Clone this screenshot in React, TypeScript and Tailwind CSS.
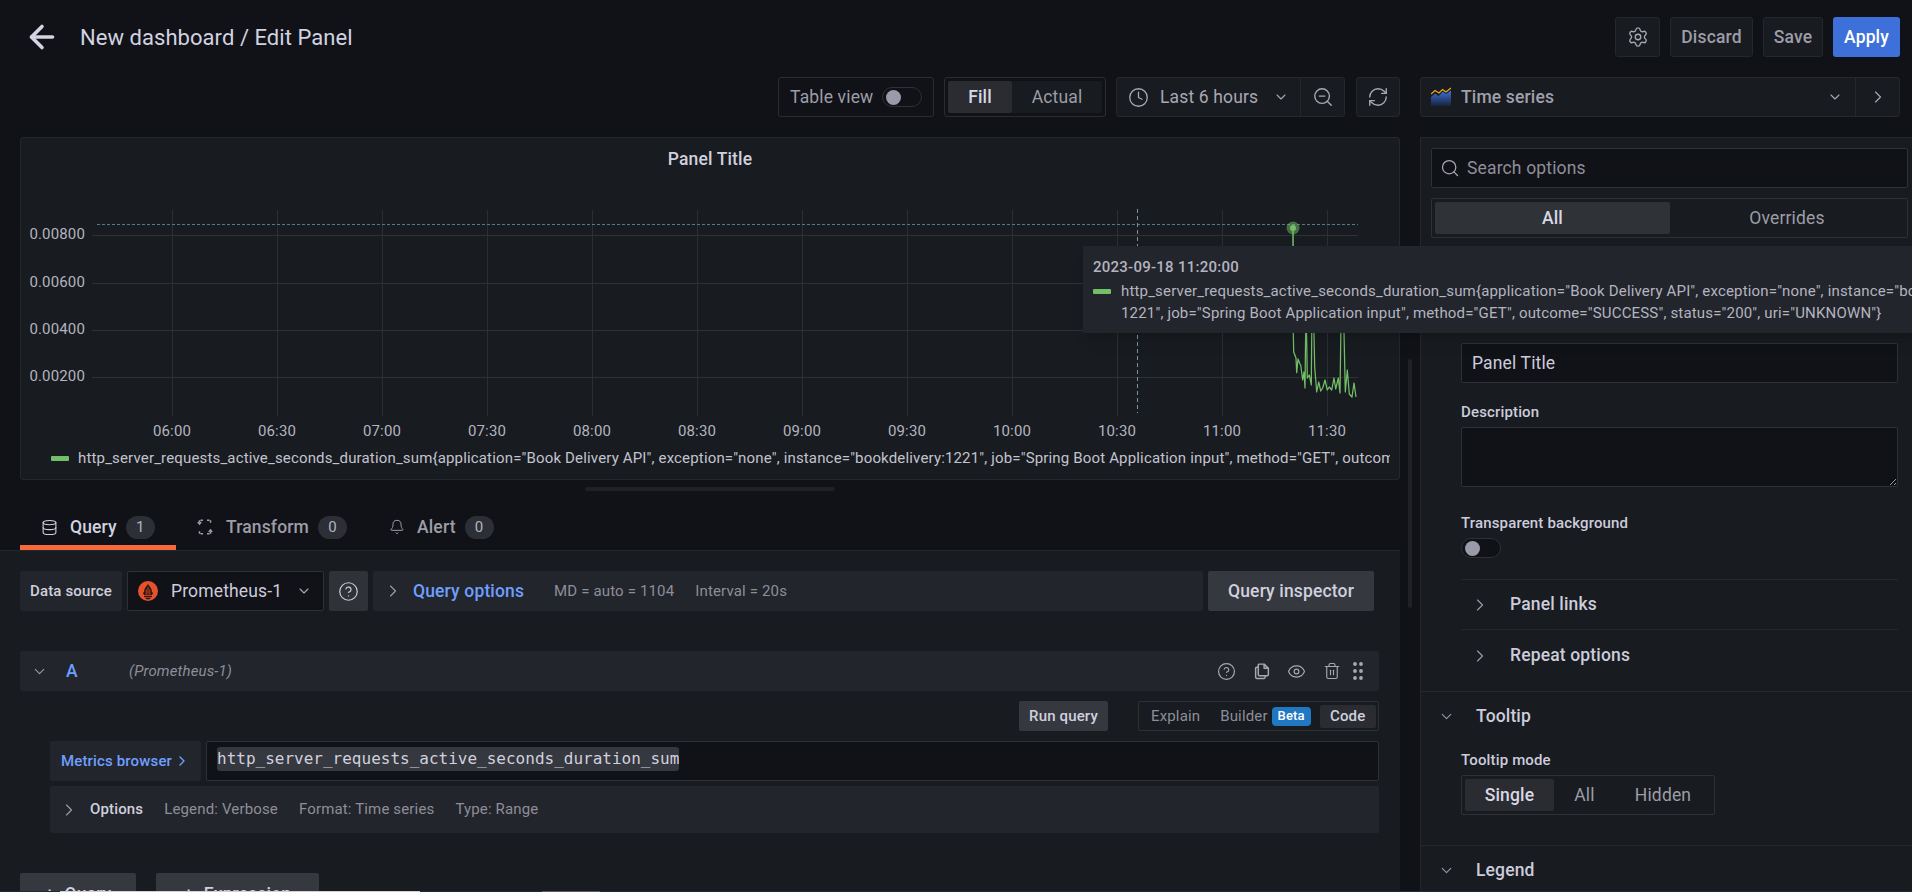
import React from "react";
import {
  ChevronDown,
  ChevronRight,
  Clock,
  Database,
  Bell,
  CircleHelp,
  Eye,
  Trash2,
  GripVertical,
  Search,
  Settings,
  ZoomOut,
  RefreshCw,
  ArrowLeft,
} from "lucide-react";

const ticks = ["06:00", "06:30", "07:00", "07:30", "08:00", "08:30", "09:00", "09:30", "10:00", "10:30", "11:00", "11:30"];
const yLabels = [
  { y: 235, label: "0.00800" },
  { y: 283, label: "0.00600" },
  { y: 330, label: "0.00400" },
  { y: 377, label: "0.00200" },
];

// series points, read off the screenshot
const series =
  "M1293 228 L1293.3 333 L1293.7 352 L1296 358 L1296.7 372.7 L1298 359 L1300 364 L1300.7 365 L1302.7 380 L1304 372 L1305 388 L1306 300 L1307.3 378 L1309.3 375 L1311.3 385 L1312 300 L1313.3 300 L1314.7 367 L1316.7 392 L1318.7 382 L1320.7 391 L1322.7 388 L1325 380 L1327.3 390 L1329.3 387 L1331.7 390 L1334 378 L1335.7 389 L1338.3 378 L1340 393 L1341.3 300 L1343.3 300 L1345.3 392 L1347.3 370 L1349.3 394 L1352 397 L1354 383 L1356 397";

const Chart = () => (
  <svg viewBox="21 205 1378 240" width={1378} height={240} className="block">
    {ticks.map((t, i) => (
      <line key={t} x1={172.5 + 105 * i} x2={172.5 + 105 * i} y1={210} y2={416} stroke="#2b2e33" />
    ))}
    {yLabels.map((l) => (
      <g key={l.label}>
        <line x1={92} x2={1358} y1={l.y + 0.5} y2={l.y + 0.5} stroke="#2e3135" />
        <text x={85} y={l.y + 4} textAnchor="end" fontSize={15} fill="#b4b4c0">
          {l.label}
        </text>
      </g>
    ))}
    {ticks.map((t, i) => (
      <text key={t} x={172 + 105 * i} y={436} textAnchor="middle" fontSize={15} fill="#b4b4c0">
        {t}
      </text>
    ))}
    <line x1={97} x2={1358} y1={224.5} y2={224.5} stroke="#567a8a" strokeDasharray="3 2" />
    <line x1={1137.5} x2={1137.5} y1={209} y2={413} stroke="#7d929c" strokeDasharray="4 3" />
    <line x1={1293} x2={1293} y1={228} y2={250} stroke="#3d6b3a" strokeWidth={1.5} />
    <path d={series} fill="none" stroke="#73bf69" strokeWidth={1.25} strokeLinejoin="round" />
    <circle cx={1293} cy={228} r={6.5} fill="#73bf69" opacity={0.5} />
    <circle cx={1293} cy={228} r={3} fill="#73bf69" />
  </svg>
);

const TimeSeriesIcon = () => (
  <svg width={20} height={20} viewBox="0 0 20 20">
    <defs>
      <linearGradient id="tsArea" x1="0" y1="0" x2="0" y2="1">
        <stop offset="0" stopColor="#3d71d9" />
        <stop offset="1" stopColor="#18233a" />
      </linearGradient>
    </defs>
    <path d="M0 10 L4 6.5 L7.5 9 L12 4.5 L15 7 L20 3.5 V19 H0 Z" fill="url(#tsArea)" />
    <path d="M0 7 L4 3.5 L8 6 L11.5 2.5 L15 5 L20 1" fill="none" stroke="#f2a51a" strokeWidth={1.3} />
  </svg>
);

const PrometheusLogo = () => (
  <svg width={20} height={20} viewBox="0 0 20 20">
    <circle cx={10} cy={10} r={10} fill="#e6522c" />
    <path
      d="M10 2.5 C10.5 5 13.8 6.5 13.8 10 C13.8 11.5 14.5 12 14.8 11 C15.3 12.5 14.5 13.6 13.6 14 H6.4 C5.5 13.6 4.7 12.5 5.2 11 C5.5 12 6.2 11.5 6.2 10 C6.2 6.5 9.5 5 10 2.5 Z"
      fill="#2a1610"
    />
    <path d="M8.2 13.5 V8.5 M10 13.5 V6 M11.8 13.5 V8.5" stroke="#e6522c" strokeWidth={0.8} />
    <rect x={6} y={14.8} width={8} height={1.3} fill="#2a1610" />
    <path d="M7.2 16.8 H12.8 C12.4 18 11.3 18.4 10 18.4 C8.7 18.4 7.6 18 7.2 16.8 Z" fill="#2a1610" />
  </svg>
);

const TransformIcon = () => (
  <svg width={18} height={18} viewBox="0 0 18 18" fill="none" stroke="currentColor" strokeWidth={1.5}>
    <path d="M7 2.2 H3.5 V5.7 M11 2.2 H14.5 V5.7 M7 15.8 H3.5 V12.3 M11 15.8 H14.5 V12.3" strokeDasharray="2.5 1" />
    <path d="M1.8 4 L3.5 6 L5.2 4 M12.8 14 L14.5 12 L16.2 14" />
  </svg>
);

const CopyIcon = () => (
  <svg width={18} height={18} viewBox="0 0 17 17" fill="none" stroke="currentColor" strokeWidth={1.4} strokeLinejoin="round">
    <path d="M6 2 H10.5 L14.5 6 V12 Q14.5 13 13.5 13 H6 Q5 13 5 12 V3 Q5 2 6 2 Z" />
    <path d="M10.5 2 V6 H14.5" />
    <path d="M5 5 H3.5 Q2.5 5 2.5 6 V14.5 Q2.5 15.5 3.5 15.5 H10.5 Q11.5 15.5 11.5 14.5 V13" />
  </svg>
);

const Toggle = () => (
  <div className="flex h-[20px] w-[40px] items-center rounded-full border border-[#2d3035] bg-[#111217] pl-[3px]">
    <div className="h-[15px] w-[15px] rounded-full bg-[#9a9aa8]" />
  </div>
);

const Badge = ({ n }: { n: number }) => (
  <span className="flex h-[23px] w-[29px] items-center justify-center rounded-full bg-[#2c2f35] pt-px text-[15px] text-[#b4b4c0]">
    {n}
  </span>
);

const App = () => {
  return (
    <div className="relative flex h-[892px] w-[1912px] flex-col overflow-hidden bg-[#111217] [font-family:Roboto,sans-serif] tracking-[0.15px] text-[#ccccdc]">
      {/* page header */}
      <div className="flex h-[77px] shrink-0 items-start justify-between pt-[17px] pr-3">
        <div className="flex h-10 items-center">
          <ArrowLeft size={36} strokeWidth={2.4} className="ml-[24px] text-[#d4d4e2]" />
          <span className="ml-[20px] text-[22px] tracking-[0.05px] text-[#d2d2e0]">New dashboard / Edit Panel</span>
        </div>
        <div className="flex h-10 items-stretch gap-[10px]">
          <button className="flex w-[45px] items-center justify-center rounded-[3px] border border-[#24272b] bg-[#181b1f] text-[#a8a8b5]">
            <Settings size={22} strokeWidth={1.5} />
          </button>
          <button className="w-[83px] rounded-[3px] border border-[#24272b] bg-[#181b1f] text-[17.5px] font-medium text-[#9d9da8]">
            Discard
          </button>
          <button className="w-[60px] rounded-[3px] border border-[#24272b] bg-[#181b1f] text-[17.5px] font-medium text-[#9d9da8]">
            Save
          </button>
          <button className="w-[67px] rounded-[3px] bg-[#3d71d9] text-[17.5px] font-medium text-white">Apply</button>
        </div>
      </div>

      {/* toolbar */}
      <div className="flex h-[60px] shrink-0 items-start pl-[778px] text-[17.5px]">
        <div className="flex h-10 w-[156px] items-center rounded-[3px] border border-[#2a2c31] pl-[11px] text-[#9d9da8]">
          Table view
          <div className="ml-[9px]">
            <Toggle />
          </div>
        </div>
        <div className="ml-[10px] flex h-10 w-[162px] items-center rounded-[3px] border border-[#2a2c31] p-[3px]">
          <div className="flex h-full w-[64px] items-center justify-center rounded-[2px] bg-[#2a2c31] font-medium text-[#d8d8e4]">Fill</div>
          <div className="flex h-full flex-1 items-center justify-center rounded-r-[2px] bg-[#181b1f] text-[#9d9da8]">Actual</div>
        </div>
        <div className="ml-[10px] flex h-10 w-[229px] items-center rounded-[3px] border border-[#24272b] bg-[#181b1f] text-[#a8a8b5]">
          <Clock size={21} strokeWidth={1.5} className="ml-[11px]" />
          <span className="ml-[11px]">Last 6 hours</span>
          <ChevronDown size={16} strokeWidth={1.6} className="ml-[15px]" />
          <div className="ml-auto flex h-full w-[44px] items-center justify-center border-l border-[#24272b]">
            <ZoomOut size={22} strokeWidth={1.5} />
          </div>
        </div>
        <div className="ml-[11px] flex h-10 w-[44px] items-center justify-center rounded-[3px] border border-[#24272b] bg-[#181b1f] text-[#a8a8b5]">
          <RefreshCw size={22} strokeWidth={1.5} />
        </div>
        <div className="ml-5 flex h-10 w-[480px] items-center rounded-[3px] border border-[#24272b] bg-[#181b1f]">
          <div className="ml-[10px]">
            <TimeSeriesIcon />
          </div>
          <span className="ml-[10px] flex-1 font-medium text-[#a0a0ac]">Time series</span>
          <ChevronDown size={16} strokeWidth={1.6} className="mr-[12px] text-[#a8a8b5]" />
          <div className="flex h-full w-[44px] items-center justify-center border-l border-[#24272b] text-[#a8a8b5]">
            <ChevronRight size={20} strokeWidth={1.4} />
          </div>
        </div>
      </div>

      {/* body */}
      <div className="flex min-h-0 flex-1">
        <div className="flex w-[1400px] shrink-0 flex-col">
          {/* panel */}
          <div className="ml-5 h-[343px] shrink-0 overflow-hidden rounded-[3px] border border-[#24272b] bg-[#181b1f]">
            <div className="h-[67px] pt-[10px] text-center text-[17.5px] font-medium leading-[22px] text-[#d0d0de]">Panel Title</div>
            <Chart />
            <div className="flex items-center pl-[30px] pt-[2px] text-[15px] leading-[22px] tracking-[0.16px] text-[#c3c3d0]">
              <span className="h-[5px] w-[18px] shrink-0 rounded-[1px] bg-[#73bf69]" />
              <span className="ml-[9px] w-[1312px] overflow-hidden whitespace-nowrap">
                {'http_server_requests_active_seconds_duration_sum{application="Book Delivery API", exception="none", instance="bookdelivery:1221", job="Spring Boot Application input", method="GET", outcome="SUCCESS", status="200", uri="UNKNOWN"}'}
              </span>
            </div>
          </div>

          {/* resize handle + tabs */}
          <div className="relative h-[70px] shrink-0">
            <div className="absolute left-[585px] top-[7px] h-1 w-[250px] rounded-full bg-[#1f2125]" />
            <div className="flex h-full items-end pl-5 text-[17.5px]">
              <div className="flex h-[47px] w-[156px] items-center border-b-[5px] border-[#f5693c] pt-[6px] text-[#d2d2e0]">
                <Database size={17} strokeWidth={1.5} className="ml-[21px]" />
                <span className="ml-[12px] font-medium">Query</span>
                <span className="ml-[9px]">
                  <Badge n={1} />
                </span>
              </div>
              <div className="flex h-[47px] items-center border-b-[5px] border-transparent pt-[6px] text-[#9d9da8]">
                <span className="ml-[20px]">
                  <TransformIcon />
                </span>
                <span className="ml-[12px] font-medium">Transform</span>
                <span className="ml-[9px]">
                  <Badge n={0} />
                </span>
              </div>
              <div className="flex h-[47px] items-center border-b-[5px] border-transparent pt-[6px] text-[#9d9da8]">
                <Bell size={16} strokeWidth={1.5} className="ml-[42px]" />
                <span className="ml-[12px] font-medium">Alert</span>
                <span className="ml-[9px]">
                  <Badge n={0} />
                </span>
              </div>
            </div>
          </div>

          {/* query editor */}
          <div className="min-h-0 flex-1 overflow-hidden border-t border-[#24272b] bg-[#181b1f] pl-5 pr-[21px] pt-5">
            <div className="flex h-10 items-stretch gap-[5px]">
              <div className="flex w-[102px] items-center justify-center rounded-[2px] bg-[#22252b] text-[15px] font-medium text-[#d0d0de]">Data source</div>
              <div className="flex w-[197px] items-center rounded-[2px] border border-[#2d3035] bg-[#111217]">
                <div className="ml-[10px]">
                  <PrometheusLogo />
                </div>
                <span className="ml-[13px] text-[17.5px] text-[#ccccdc]">Prometheus-1</span>
                <ChevronDown size={16} strokeWidth={1.6} className="ml-[14px] text-[#a8a8b5]" />
              </div>
              <div className="flex w-[39px] items-center justify-center rounded-[2px] bg-[#2f3237] text-[#c8c8d4]">
                <CircleHelp size={21} strokeWidth={1.4} />
              </div>
              <div className="flex w-[830px] items-center rounded-[2px] bg-[#22252b]">
                <ChevronRight size={20} strokeWidth={1.4} className="ml-[10px] text-[#9a9aa6]" />
                <span className="ml-[10px] text-[17.5px] font-medium text-[#6e9fff]">Query options</span>
                <span className="ml-[30px] text-[15px] text-[#8e8e9a]">MD = auto = 1104</span>
                <span className="ml-[21px] text-[15px] text-[#8e8e9a]">Interval = 20s</span>
              </div>
              <div className="flex w-[166px] items-center justify-center rounded-[2px] bg-[#35383e] text-[17.5px] font-medium text-[#d0d0de]">Query inspector</div>
            </div>

            <div className="mt-10 flex h-10 items-center rounded-[2px] bg-[#22252b]">
              <ChevronDown size={17} strokeWidth={1.6} className="ml-[11px] text-[#9a9aa6]" />
              <span className="ml-[18px] w-[63px] text-[17.5px] font-medium text-[#6e9fff]">A</span>
              <span className="text-[15px] italic text-[#8e8e9a]">(Prometheus-1)</span>
              <div className="ml-auto flex items-center text-[#a8a8b5]">
                <span className="flex w-[35px] justify-center">
                  <CircleHelp size={19} strokeWidth={1.5} />
                </span>
                <span className="flex w-[35px] justify-center">
                  <CopyIcon />
                </span>
                <span className="flex w-[35px] justify-center">
                  <Eye size={19} strokeWidth={1.5} />
                </span>
                <span className="flex w-[35px] justify-center">
                  <Trash2 size={18} strokeWidth={1.5} />
                </span>
                <GripVertical size={24} strokeWidth={1.8} className="-ml-[3px] mr-[9px]" />
              </div>
            </div>

            <div className="mt-[10px] flex h-[30px] justify-end">
              <div className="flex w-[89px] items-center justify-center rounded-[2px] bg-[#35383e] text-[15px] font-medium text-[#d0d0de]">Run query</div>
              <div className="ml-[30px] flex w-[241px] items-center rounded-[2px] border border-[#2d3035] pl-3 text-[15px] text-[#8e8e9a]">
                Explain
                <span className="ml-[20px]">Builder</span>
                <span className="ml-1 flex h-[19px] w-[39px] items-center justify-center rounded-[4px] bg-[#1f78c1] text-[13px] font-medium text-white">Beta</span>
                <span className="ml-[9px] flex h-[23px] w-[56px] items-center justify-center rounded-[2px] bg-[#2a2c31] font-medium text-[#d0d0de]">Code</span>
              </div>
            </div>

            <div className="ml-[30px] mt-[10px] flex h-10 gap-[5px]">
              <div className="flex w-[151px] items-center justify-center rounded-[2px] bg-[#22252b] text-[15px] font-medium text-[#6e9fff]">
                Metrics browser <ChevronRight size={16} strokeWidth={2} className="ml-[2px]" />
              </div>
              <div className="flex flex-1 items-center rounded-[2px] border border-[#2d3035] bg-[#111217] pb-[4px] pl-[10px]">
                <span className="rounded-[3px] bg-[#35383e] [font-family:'DejaVu_Sans_Mono',monospace] text-[16px] leading-[24px] tracking-normal text-[#d0d0de]">
                  http_server_requests_active_seconds_duration_sum
                </span>
              </div>
            </div>

            <div className="ml-[30px] mt-[5px] flex h-[47px] items-center rounded-[2px] bg-[#22252b] text-[15px] text-[#8e8e9a]">
              <ChevronRight size={20} strokeWidth={1.4} className="ml-[9px] text-[#9a9aa6]" />
              <span className="ml-[11px] font-medium text-[#d0d0de]">Options</span>
              <span className="ml-[21px]">Legend: Verbose</span>
              <span className="ml-[21px]">Format: Time series</span>
              <span className="ml-[21px]">Type: Range</span>
            </div>

            <div className="mt-10 flex gap-5 text-[17.5px] font-medium text-[#d0d0de]">
              <div className="flex h-[42px] w-[116px] items-center justify-center rounded-[2px] bg-[#35383e]">
                <span className="mr-[10px]">+</span>Query
              </div>
              <div className="flex h-[42px] w-[163px] items-center justify-center rounded-[2px] bg-[#35383e]">
                <span className="mr-[10px]">+</span>Expression
              </div>
            </div>
          </div>
        </div>

        {/* scrollbar gutter */}
        <div className="w-5 shrink-0 pl-2 pt-[222px]">
          <div className="h-[249px] w-1 rounded-full bg-[#1f2125]" />
        </div>

        {/* options pane */}
        <div className="min-w-0 flex-1 border-l border-t border-[#24272b] bg-[#181b1f] pt-[10px]">
          <div className="ml-[10px] flex h-10 w-[477px] items-center rounded-[2px] border border-[#2d3035] bg-[#111217] text-[17.5px] text-[#8e8e9a]">
            <Search size={20} strokeWidth={1.5} className="ml-[8px] text-[#a8a8b5]" />
            <span className="ml-[7px]">Search options</span>
          </div>
          <div className="ml-[10px] mt-[10px] flex h-10 w-[477px] items-center rounded-[2px] border border-[#2d3035] p-[3px] text-[17.5px]">
            <div className="flex h-full w-[235px] items-center justify-center rounded-[2px] bg-[#2f3237] font-medium text-[#d8d8e4]">All</div>
            <div className="flex-1 text-center text-[#9d9da8]">Overrides</div>
          </div>

          <div className="ml-10 mt-[105px] w-[437px]">
            <input
              readOnly
              value="Panel Title"
              className="block h-10 w-full rounded-[2px] border border-[#2d3035] bg-[#111217] pl-[10px] text-[17.5px] text-[#ccccdc]"
            />
            <div className="mt-5 text-[15px] font-medium leading-[18px] text-[#ccccdc]">Description</div>
            <textarea readOnly className="mt-[6px] block h-[60px] w-full rounded-[2px] border border-[#2d3035] bg-[#111217]" />
            <div className="mt-[27px] text-[15px] font-medium leading-[18px] text-[#ccccdc]">Transparent background</div>
            <div className="mt-[6px]">
              <Toggle />
            </div>
            <div className="mt-[21px] border-t border-[#24272b]" />
            <div className="flex h-[50px] items-center border-b border-[#24272b] text-[17.5px] font-medium">
              <ChevronRight size={20} strokeWidth={1.4} className="ml-[9px] text-[#9a9aa6]" />
              <span className="ml-[20px]">Panel links</span>
            </div>
            <div className="flex h-[51px] items-center text-[17.5px] font-medium">
              <ChevronRight size={20} strokeWidth={1.4} className="ml-[9px] text-[#9a9aa6]" />
              <span className="ml-[20px]">Repeat options</span>
            </div>
          </div>

          <div className="mt-[10px] border-t border-[#24272b]">
            <div className="flex h-[49px] items-center text-[17.5px] font-medium">
              <ChevronDown size={17} strokeWidth={1.6} className="ml-[17px] text-[#9a9aa6]" />
              <span className="ml-[21px]">Tooltip</span>
            </div>
            <div className="ml-10 mt-[10px] text-[15px] font-medium leading-[18px]">Tooltip mode</div>
            <div className="ml-10 mt-[6px] flex h-10 w-[254px] items-center rounded-[2px] border border-[#2d3035] p-[3px] text-[17.5px]">
              <div className="flex h-full w-[89px] items-center justify-center rounded-[2px] bg-[#2a2c31] font-medium text-[#d8d8e4]">Single</div>
              <div className="flex h-full w-[61px] items-center justify-center text-[#9d9da8]">All</div>
              <div className="flex h-full w-[96px] items-center justify-center text-[#9d9da8]">Hidden</div>
            </div>
            <div className="mt-[30px] flex h-[50px] items-center border-t border-[#24272b] text-[17.5px] font-medium">
              <ChevronDown size={17} strokeWidth={1.6} className="ml-[17px] text-[#9a9aa6]" />
              <span className="ml-[21px]">Legend</span>
            </div>
          </div>
        </div>
      </div>

      {/* hover tooltip */}
      <div className="absolute left-[1083px] top-[246px] h-[87px] w-[900px] bg-[#22252b] pl-[10px] pt-[10px] text-[15px] leading-[22px] tracking-[0.17px] text-[#b4b4c0] shadow-lg">
        <div className="font-medium tracking-[0.25px]">2023-09-18 11:20:00</div>
        <div className="mt-[2px] flex">
          <span className="mt-[9px] h-[5px] w-[18px] shrink-0 rounded-[1px] bg-[#73bf69]" />
          <div className="ml-[10px] whitespace-nowrap">
            <div>{'http_server_requests_active_seconds_duration_sum{application="Book Delivery API", exception="none", instance="bookdelivery:'}</div>
            <div>{'1221", job="Spring Boot Application input", method="GET", outcome="SUCCESS", status="200", uri="UNKNOWN"}'}</div>
          </div>
        </div>
      </div>

      {/* 1px capture artefact along the bottom edge */}
      <div className="absolute bottom-0 left-0 flex h-px w-full bg-[#1e2d33]">
        <div className="ml-[60px] w-[360px] bg-[#cfcfcf]" />
        <div className="ml-[122px] w-[58px] bg-[#555a5e]" />
      </div>
    </div>
  );
};

export default App;
